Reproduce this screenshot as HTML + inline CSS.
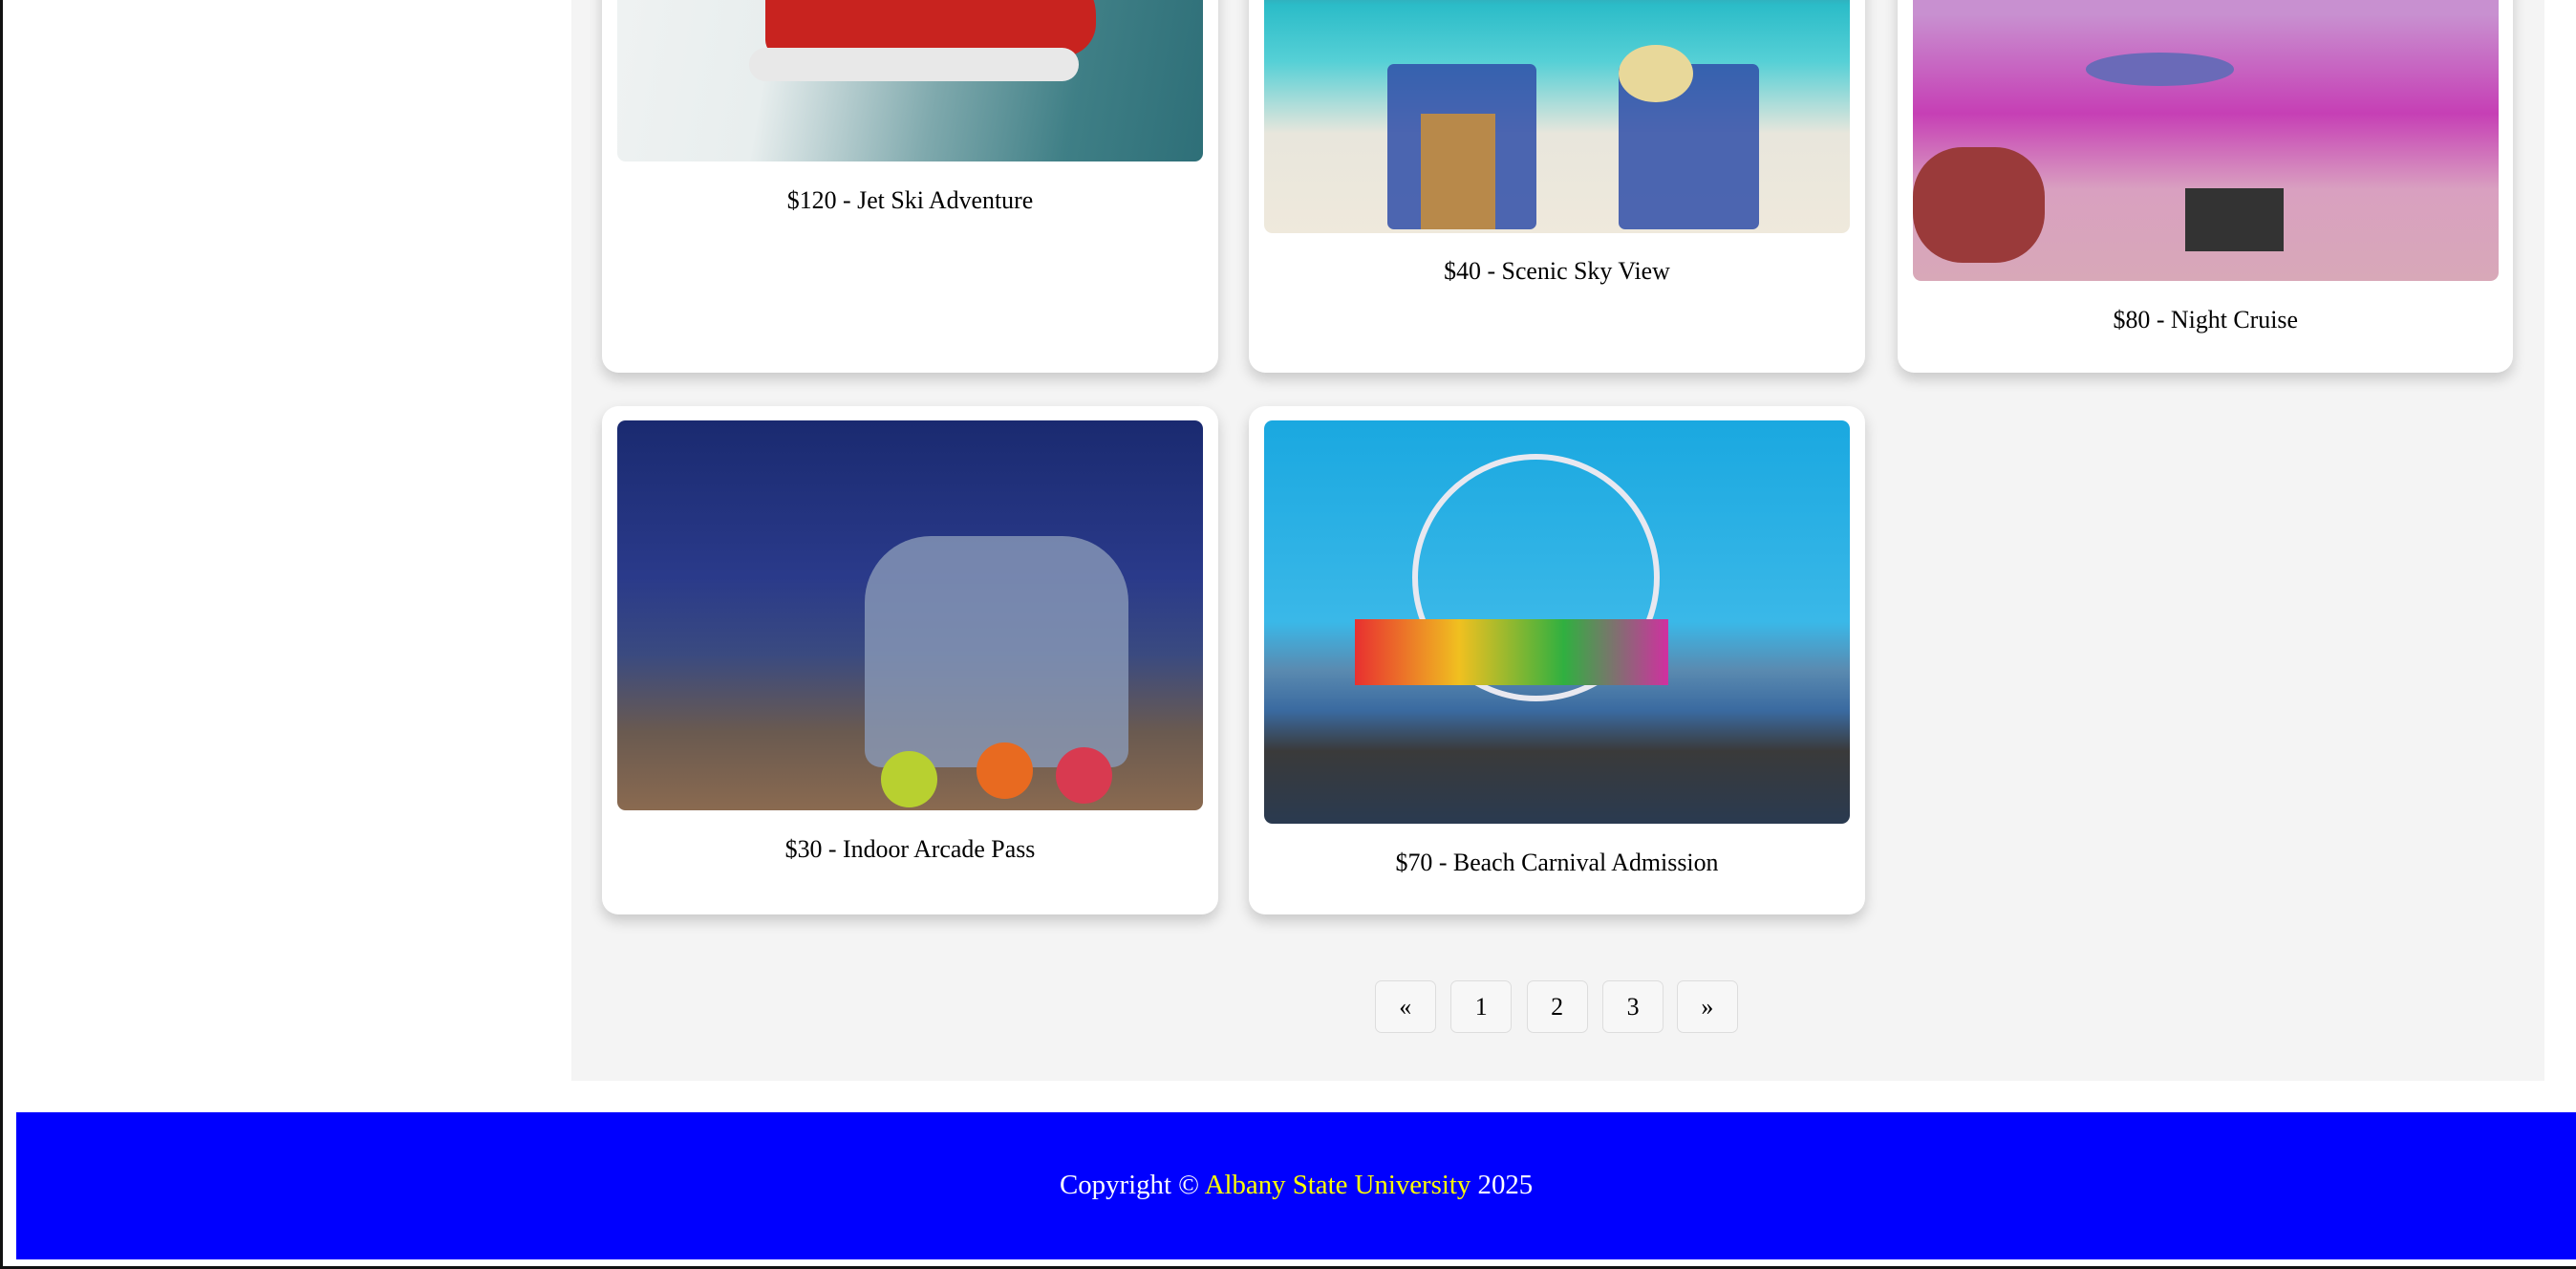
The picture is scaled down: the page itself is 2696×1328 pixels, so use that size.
<!DOCTYPE html>
<html><head><meta charset="utf-8">
<style>
html,body{margin:0;padding:0;background:#fff;overflow:hidden}
body{width:2696px;height:1328px}
#w{zoom:1.7271;width:1561px;height:769px;position:relative;overflow:hidden;font-family:"Liberation Serif",serif;background:#fff}
.lb{position:absolute;left:0;top:0;width:2px;height:771px;background:#111}
.bb{position:absolute;left:0;top:767px;width:1561px;height:2px;background:#111}
.main{position:absolute;left:346px;top:0;width:1196px;height:655px;background:#f4f4f4}
.card{position:absolute;background:#fff;border-radius:10px;box-shadow:0 4px 8px rgba(0,0,0,.18);width:373px}
.img{position:absolute;left:9px;width:355px;border-radius:5px}
.cap{position:absolute;left:0;width:100%;text-align:center;font-size:15px;color:#000}
.pg{position:absolute;top:594px;width:36px;height:31px;border:1px solid #ddd;border-radius:4px;background:#f7f7f7;text-align:center;line-height:31px;font-size:15px}
.ft{position:absolute;left:10px;top:674px;width:1551px;height:89px;background:#0000ff;color:#fff;text-align:center;line-height:89px;font-size:16.7px}
.ft span{color:#ffff00}
</style></head><body><div id="w">
<div class="lb"></div>
<div class="main"></div>

<div class="card" style="left:365px;top:-300px;height:526px">
 <div class="img" style="top:9px;height:389px;background:linear-gradient(100deg,#f2f4f4 0%,#e8eeee 35%,#7fa9ad 60%,#3f7f86 80%,#2e6f78 100%)">
  <div style="position:absolute;left:90px;top:270px;width:200px;height:55px;background:#c8231f;border-radius:10px 30px 20px 10px"></div>
  <div style="position:absolute;left:80px;top:320px;width:200px;height:20px;background:#e8e8e8;border-radius:10px"></div>
 </div>
 <div class="cap" style="top:413px">$120 - Jet Ski Adventure</div>
</div>

<div class="card" style="left:757px;top:-300px;height:526px">
 <div class="img" style="top:9px;height:432px;background:linear-gradient(180deg,#8ab8d8 0%,#4a8090 64%,#2bbcc8 68%,#56d0d6 76%,#e8e6dc 86%,#efe9dc 100%)">
  <div style="position:absolute;left:75px;top:330px;width:90px;height:100px;background:#2f4ea8;opacity:.85;border-radius:4px"></div>
  <div style="position:absolute;left:95px;top:360px;width:45px;height:70px;background:#b8894a"></div>
  <div style="position:absolute;left:215px;top:330px;width:85px;height:100px;background:#2f4ea8;opacity:.85;border-radius:4px"></div>
  <div style="position:absolute;left:215px;top:318px;width:45px;height:35px;background:#e8d89a;border-radius:50%"></div>
 </div>
 <div class="cap" style="top:456px">$40 - Scenic Sky View</div>
</div>

<div class="card" style="left:1150px;top:-300px;height:526px">
 <div class="img" style="top:9px;height:461px;background:linear-gradient(180deg,#b9a0d8 0%,#c890d0 65%,#c63fb5 78%,#d9a0c0 88%,#d8a8b8 100%)">
  <div style="position:absolute;left:0;top:380px;width:80px;height:70px;background:#9a3a3a;border-radius:30px"></div>
  <div style="position:absolute;left:105px;top:323px;width:90px;height:20px;background:#6a6ab8;border-radius:50%"></div>
  <div style="position:absolute;left:165px;top:405px;width:60px;height:38px;background:#333"></div>
 </div>
 <div class="cap" style="top:485px">$80 - Night Cruise</div>
</div>

<div class="card" style="left:365px;top:246px;height:308px">
 <div class="img" style="top:9px;height:236px;background:linear-gradient(180deg,#1a2a70 0%,#2a3a8a 40%,#3a4a80 60%,#6a5a50 80%,#8a6a50 100%)">
  <div style="position:absolute;left:150px;top:70px;width:160px;height:140px;background:#8a9ab8;border-radius:40px 40px 10px 10px;opacity:.8"></div>
  <div style="position:absolute;left:160px;top:200px;width:34px;height:34px;background:#b8d030;border-radius:50%"></div>
  <div style="position:absolute;left:218px;top:195px;width:34px;height:34px;background:#e86a20;border-radius:50%"></div>
  <div style="position:absolute;left:266px;top:198px;width:34px;height:34px;background:#d83a50;border-radius:50%"></div>
 </div>
 <div class="cap" style="top:260px">$30 - Indoor Arcade Pass</div>
</div>

<div class="card" style="left:757px;top:246px;height:308px">
 <div class="img" style="top:9px;height:244px;background:linear-gradient(180deg,#1aa8e0 0%,#3ab8e8 50%,#5a8ab0 62%,#3a6aa0 72%,#3a3a3a 82%,#2a3a50 100%)">
  <div style="position:absolute;left:90px;top:20px;width:150px;height:150px;border:4px solid #e8e8f0;border-radius:50%;box-sizing:border-box"></div>
  <div style="position:absolute;left:55px;top:120px;width:190px;height:40px;background:linear-gradient(90deg,#e83030,#f0c020,#30b040,#d030a0)"></div>
 </div>
 <div class="cap" style="top:268px">$70 - Beach Carnival Admission</div>
</div>

<div class="pg" style="left:833px">«</div>
<div class="pg" style="left:879px">1</div>
<div class="pg" style="left:925px">2</div>
<div class="pg" style="left:971px">3</div>
<div class="pg" style="left:1016px">»</div>

<div class="ft">Copyright © <span>Albany State University</span> 2025</div>
<div class="bb"></div>
</div></body></html>
